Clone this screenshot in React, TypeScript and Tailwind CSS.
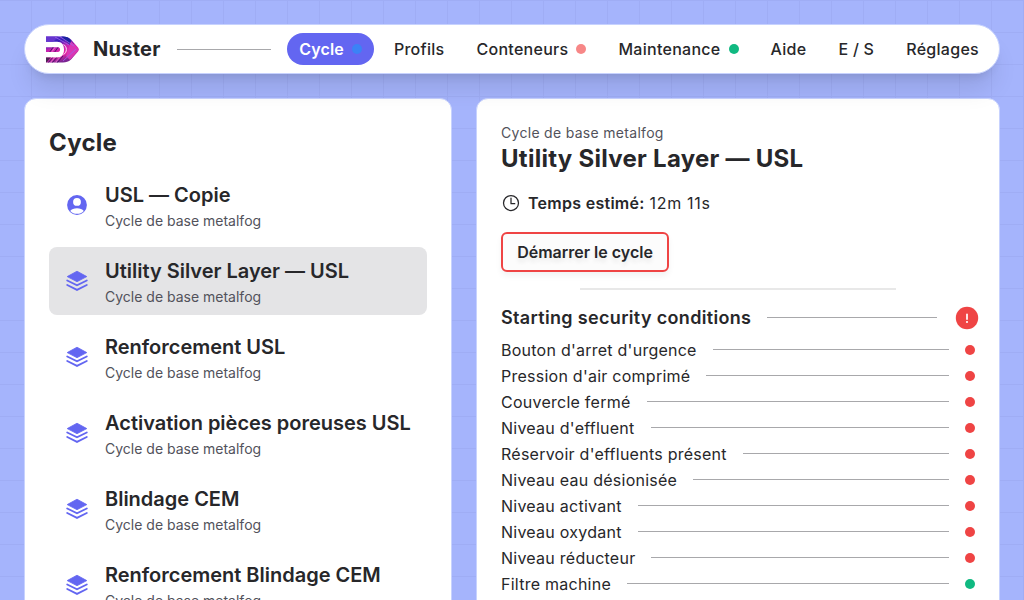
import { IoTimeOutline } from "react-icons/io5";

const cycles = [
  { name: "USL — Copie", user: true },
  { name: "Utility Silver Layer — USL", selected: true },
  { name: "Renforcement USL" },
  { name: "Activation pièces poreuses USL" },
  { name: "Blindage CEM" },
  { name: "Renforcement Blindage CEM" },
];

const conditions = [
  { name: "Bouton d'arret d'urgence", ok: false },
  { name: "Pression d'air comprimé", ok: false },
  { name: "Couvercle fermé", ok: false },
  { name: "Niveau d'effluent", ok: false },
  { name: "Réservoir d'effluents présent", ok: false },
  { name: "Niveau eau désionisée", ok: false },
  { name: "Niveau activant", ok: false },
  { name: "Niveau oxydant", ok: false },
  { name: "Niveau réducteur", ok: false },
  { name: "Filtre machine", ok: true },
];

const links = [
  { name: "Cycle", dot: "bg-[#3b82f6]", active: true },
  { name: "Profils" },
  { name: "Conteneurs", dot: "bg-[#f78787]" },
  { name: "Maintenance", dot: "bg-[#10b981]" },
  { name: "Aide" },
  { name: "E / S" },
  { name: "Réglages" },
];

function Logo() {
  return (
    <svg viewBox="0 0 34 27" className="h-[27px] w-[34px] shrink-0">
      <defs>
        <linearGradient id="logo" x1="0" y1="0" x2="0.35" y2="1">
          <stop offset="0" stopColor="#7a35d8" />
          <stop offset="0.28" stopColor="#3420b8" />
          <stop offset="0.5" stopColor="#c423b0" />
          <stop offset="0.75" stopColor="#e823a6" />
          <stop offset="1" stopColor="#7b2492" />
        </linearGradient>
        <clipPath id="mark">
          <path d="M1 .5H18C21 .5 23.500 1.200 26 3.500L33 11.500Q34.500 13.500 33 15.500L26 23.500C23.500 25.800 21 26.500 18 26.500H1V21.500H12C17 21.500 19 18 19 13.500C19 9 17 5.700 12 5.700H1Z M1 11.200H13C15.800 11.200 15.800 16 13 16H1Z M18 8.500C24.500 9.500 24.500 17.500 18 18.500C20.500 15.500 20.500 12 18 8.500Z" />
        </clipPath>
      </defs>
      <g clipPath="url(#mark)">
        <rect width="34" height="27" fill="url(#logo)" />
        <path d="M0 0H14L8 6H0Z" fill="#6635cf" />
        <path d="M16 0H22L29 8L25 9Z" fill="#1b229f" />
        <path d="M26 5L34 13.500L25 24L21 20Z" fill="#d936b4" />
        <path d="M0 20H7L1 27H0Z" fill="#4a2454" />
        <g fill="none" strokeWidth=".8">
          <path d="M4 17L9 10M9 17L14 10M3 27L9 20M7 27L13 20M12 27L18 20" stroke="#311060" />
          <path d="M5 27L11 20M10 27L16 20M6 17L11 10" stroke="#f27fda" />
          <path d="M10 1L24 9M14 0L29 10M18 25L31 13" stroke="#9e63ef" />
        </g>
      </g>
      <path d="M18.500 8.500C22.300 10.500 22.300 16.500 18.500 18.500" fill="none" stroke="#fff" strokeWidth=".9" />
    </svg>
  );
}

function UserIcon() {
  return (
    <svg viewBox="0 0 24 24" className="size-6 text-[#6366f1]" fill="currentColor">
      <path
        fillRule="evenodd"
        d="M12 2.100a9.900 9.900 0 1 0 0 19.800a9.900 9.900 0 1 0 0-19.800ZM12 5a3.900 3.900 0 1 1 0 7.800a3.900 3.900 0 1 1 0-7.800ZM5.200 18C6.600 16.200 9 15.300 12 15.300S17.400 16.200 18.800 18C17 20 14.700 20.800 12 20.800S7 20 5.200 18Z"
      />
    </svg>
  );
}

function LayersIcon() {
  return (
    <svg viewBox="0 0 24 24" className="size-6 text-[#6366f1]" fill="none" stroke="currentColor">
      <path d="M12 2.200L21.800 7.600L12 12.700L2.200 7.600Z" fill="currentColor" strokeWidth=".8" strokeLinejoin="round" />
      <path d="M2.200 11.500L12 16.300L21.800 11.500M2.200 16L12 20.900L21.800 16" strokeWidth="1.800" strokeLinecap="round" />
    </svg>
  );
}

function AlertIcon() {
  return (
    <svg viewBox="0 0 28 28" className="-mr-1.5 size-7 shrink-0">
      <circle cx="14" cy="14" r="11.200" fill="#ef4444" />
      <path d="M14 10.400V15.100" stroke="#fff" strokeWidth="1.700" strokeLinecap="round" />
      <circle cx="14" cy="18" r="1.050" fill="#fff" />
    </svg>
  );
}

export default function App() {
  return (
    <div className="flex h-[600px] flex-col gap-6 overflow-hidden bg-[#a5b4fc] bg-[linear-gradient(to_right,#9fadf5_1px,transparent_1px),linear-gradient(to_bottom,#9fadf5_1px,transparent_1px)] bg-[size:32px_32px] bg-[position:31px_0px] p-6 font-['Inter',sans-serif] text-[#27272a]">
      <nav className="z-10 flex h-[50px] shrink-0 items-center rounded-full border border-[#c7d2fe] bg-white pr-2 pl-5 shadow-xl">
        <Logo />
        <span className="ml-3.5 text-xl font-bold tracking-[0.25px]">Nuster</span>
        <span className="mx-4 h-px grow bg-[#a8a8ab]" />
        <ul className="flex gap-2">
          {links.map((link) => (
            <li
              key={link.name}
              className={
                link.active
                  ? "flex h-8 items-center gap-2 rounded-full bg-[#6366f1] px-3 font-semibold tracking-[0.15px] text-white"
                  : "flex h-8 items-center gap-2 rounded-full px-3 font-medium tracking-[0.28px]"
              }
            >
              <span>{link.name}</span>
              {link.dot && <span className={`size-2.5 rounded-full ${link.dot}`} />}
            </li>
          ))}
        </ul>
      </nav>

      <main className="grid h-[600px] shrink-0 grid-cols-[428px_524px] gap-6">
        <section className="rounded-xl border border-[#c7d2fe] bg-white p-6">
          <h1 className="mt-1 text-2xl leading-8 font-bold tracking-[0.25px]">Cycle</h1>
          <ul className="mt-3 flex flex-col gap-2">
            {cycles.map((cycle) => (
              <li
                key={cycle.name}
                className={
                  cycle.selected
                    ? "flex h-[68px] items-center gap-4 rounded-lg bg-[#e4e4e6] px-4"
                    : "flex h-[68px] items-center gap-4 rounded-lg px-4"
                }
              >
                {cycle.user ? <UserIcon /> : <LayersIcon />}
                <div className="pt-0.5">
                  <h2 className="text-xl leading-7 font-semibold tracking-[-0.01px] whitespace-nowrap">
                    {cycle.name}
                  </h2>
                  <p className="mt-0.5 text-sm leading-5 text-[#52525b]">Cycle de base metalfog</p>
                </div>
              </li>
            ))}
          </ul>
        </section>

        <section className="rounded-xl border border-[#c7d2fe] bg-white p-6">
          <p className="text-sm leading-5 tracking-[0.3px] text-[#52525b]">Cycle de base metalfog</p>
          <h1 className="text-2xl leading-8 font-bold tracking-[0.27px]">Utility Silver Layer — USL</h1>
          <div className="mt-4 flex h-6 items-center gap-[7px]">
            <IoTimeOutline className="size-5" />
            <p className="tracking-[0.28px]">
              <span className="font-semibold">Temps estimé:</span>{" "}
              <span className="tracking-[0.7px]">12m 11s</span>
            </p>
          </div>
          <button className="mt-[17px] block h-10 w-[168px] rounded-md border-2 border-[#ef4444] bg-[#fcfcfc] font-semibold shadow-[0_4px_6px_rgb(0_0_0/0.05)] text-shadow-[0_4px_4px_rgb(0_0_0/0.08)]">
            Démarrer le cycle
          </button>
          <div className="mx-auto mt-4 h-0.5 w-[316px] bg-[#e8e8e8]" />
          <div className="mt-3 flex h-8 items-center">
            <h2 className="text-lg font-semibold tracking-[0.33px]">Starting security conditions</h2>
            <span className="mx-4 mb-0.5 h-px grow bg-[#a8a8ab]" />
            <AlertIcon />
          </div>
          <ul className="mt-0.5">
            {conditions.map((condition) => (
              <li key={condition.name} className="flex h-[26px] items-center pt-0.5">
                <span className="tracking-[0.25px]">{condition.name}</span>
                <span className="mx-4 mb-0.5 h-px grow bg-[#a8a8ab]" />
                <span
                  className={
                    condition.ok
                      ? "size-2.5 rounded-full bg-[#10b981]"
                      : "size-2.5 rounded-full bg-[#ef4444]"
                  }
                />
              </li>
            ))}
          </ul>
        </section>
      </main>
    </div>
  );
}
